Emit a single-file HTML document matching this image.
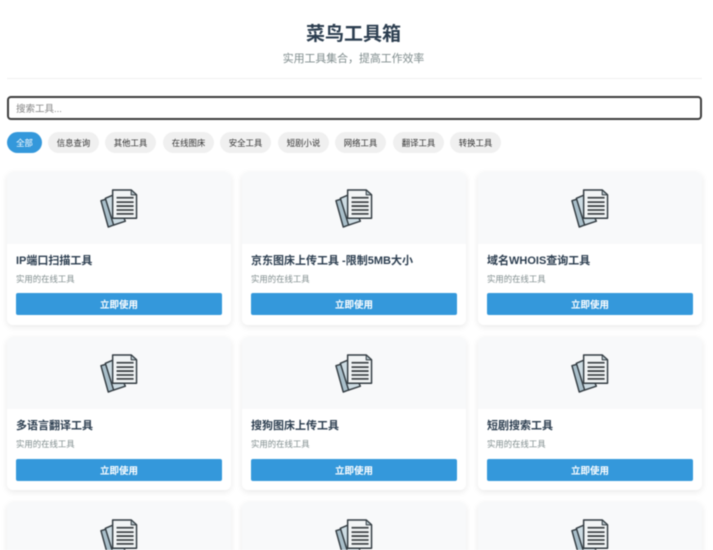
<!DOCTYPE html>
<html lang="zh">
<head>
<meta charset="utf-8">
<title>菜鸟工具箱</title>
<style>
*{box-sizing:border-box}
html,body{margin:0;padding:0;width:713px;height:550px;overflow:hidden;background:#fff}
body{font-family:"Liberation Sans","Noto Sans CJK SC",sans-serif;color:#2c3e50}
#w{position:absolute;left:0;top:0;width:713px;height:550px;overflow:hidden;filter:blur(.4px)}
h1{position:absolute;left:0;width:707px;top:22px;margin:0;text-align:center;font-size:19px;line-height:26px;font-weight:700;color:#2c3e50}
.sub{position:absolute;left:0;width:707px;top:50px;text-align:center;font-size:10.9px;line-height:18px;color:#7f8c8d}
.hr{position:absolute;left:7px;width:695px;top:78px;height:1px;background:#f0f0f0}
.search{position:absolute;left:7px;top:96px;width:695px;height:24px;border:2px solid #3d3d3d;border-radius:4px;background:#fff;font-size:9.5px;line-height:21px;padding:1px 0 0 7px;color:#858585}
.pill{position:absolute;top:132px;height:21px;border-radius:11px;background:#f0f0f0;font-size:8.4px;line-height:23px;text-align:center;color:#333;width:51px}
.pill.on{background:#3498db;color:#fff;width:35px}
.card{position:absolute;width:224px;height:153px;background:#fff;border-radius:6px;box-shadow:0 2px 7px rgba(0,0,0,.09);overflow:hidden}
.img{height:72px;background:#f8f9fa;position:relative}
.img svg{position:absolute;left:91.5px;top:16.5px}
.t{position:absolute;left:9px;top:81px;font-size:11px;line-height:16px;font-weight:700;color:#2c3e50;white-space:nowrap}
.d{position:absolute;left:9px;top:101px;font-size:8.4px;line-height:13px;color:#7f8c8d}
.b{position:absolute;left:9px;top:121px;width:206px;height:22px;background:#3498db;border-radius:2px;color:#fff;font-size:9.5px;font-weight:700;line-height:25px;text-align:center}
.r2 .b{top:122px}
</style>
</head>
<body>
<svg width="0" height="0" style="position:absolute">
<defs>
<symbol id="doc" viewBox="0 0 40 40">
<path d="M2 12 L12 9 L20 35 L9.500 39Z" fill="#a9bfca" stroke="#333c42" stroke-width="1.500" stroke-linejoin="round"/>
<path d="M6.500 9.500 L15 6 L27 33 L15 37Z" fill="#cddce3" stroke="#333c42" stroke-width="1.500" stroke-linejoin="round"/>
<path d="M14 1 L33 1 L38.500 6 L38.500 30 L14 30Z" fill="#f2f5f6" stroke="#333c42" stroke-width="1.500" stroke-linejoin="round"/>
<path d="M33 1 L33 6 L38.500 6Z" fill="#b8c6cc" stroke="#333c42" stroke-width="1" stroke-linejoin="round"/>
<path d="M18 9H35.500M18 13.500H35.500M18 17.500H35.500M18 21.500H35.500M18 25.500H35.500" stroke="#3f4447" stroke-width="1.800" fill="none"/>
</symbol>
</defs>
</svg>
<div id="w">
<h1>菜鸟工具箱</h1>
<div class="sub">实用工具集合，提高工作效率</div>
<div class="hr"></div>
<div class="search">搜索工具...</div>

<div class="pill on" style="left:7px">全部</div>
<div class="pill" style="left:48px">信息查询</div>
<div class="pill" style="left:105px">其他工具</div>
<div class="pill" style="left:163px">在线图床</div>
<div class="pill" style="left:220px">安全工具</div>
<div class="pill" style="left:278px">短剧小说</div>
<div class="pill" style="left:335px">网络工具</div>
<div class="pill" style="left:393px">翻译工具</div>
<div class="pill" style="left:450px">转换工具</div>

<div class="card" style="left:7px;top:172px"><div class="img"><svg width="39" height="39"><use href="#doc"/></svg></div><div class="t">IP端口扫描工具</div><div class="d">实用的在线工具</div><div class="b">立即使用</div></div>
<div class="card" style="left:242px;top:172px"><div class="img"><svg width="39" height="39"><use href="#doc"/></svg></div><div class="t">京东图床上传工具 -限制5MB大小</div><div class="d">实用的在线工具</div><div class="b">立即使用</div></div>
<div class="card" style="left:478px;top:172px"><div class="img"><svg width="39" height="39"><use href="#doc"/></svg></div><div class="t">域名WHOIS查询工具</div><div class="d">实用的在线工具</div><div class="b">立即使用</div></div>

<div class="card r2" style="left:7px;top:337px"><div class="img"><svg width="39" height="39"><use href="#doc"/></svg></div><div class="t">多语言翻译工具</div><div class="d">实用的在线工具</div><div class="b">立即使用</div></div>
<div class="card r2" style="left:242px;top:337px"><div class="img"><svg width="39" height="39"><use href="#doc"/></svg></div><div class="t">搜狗图床上传工具</div><div class="d">实用的在线工具</div><div class="b">立即使用</div></div>
<div class="card r2" style="left:478px;top:337px"><div class="img"><svg width="39" height="39"><use href="#doc"/></svg></div><div class="t">短剧搜索工具</div><div class="d">实用的在线工具</div><div class="b">立即使用</div></div>

<div class="card" style="left:7px;top:502px"><div class="img"><svg width="39" height="39"><use href="#doc"/></svg></div></div>
<div class="card" style="left:242px;top:502px"><div class="img"><svg width="39" height="39"><use href="#doc"/></svg></div></div>
<div class="card" style="left:478px;top:502px"><div class="img"><svg width="39" height="39"><use href="#doc"/></svg></div></div>
</div>
</body>
</html>
